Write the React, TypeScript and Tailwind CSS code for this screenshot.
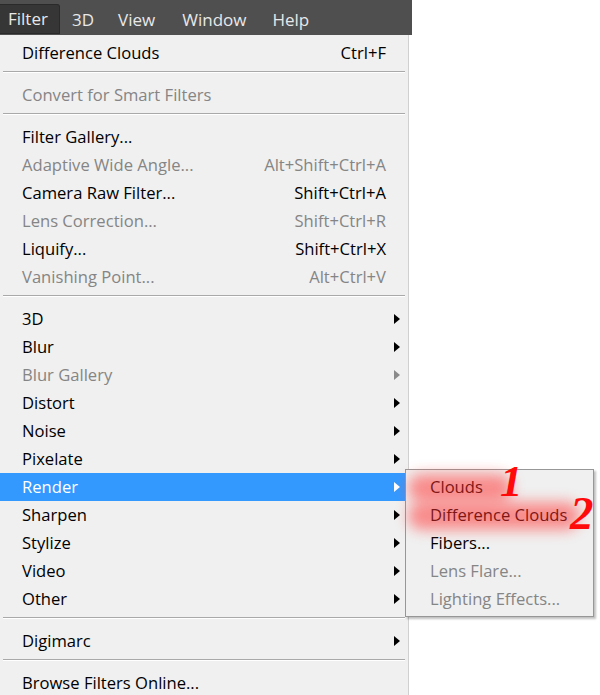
import React from "react";

type Item =
  | { sep: true }
  | { label: string; shortcut?: string; disabled?: boolean; sub?: boolean; active?: boolean };

const items: Item[] = [
  { label: "Difference Clouds", shortcut: "Ctrl+F" },
  { sep: true },
  { label: "Convert for Smart Filters", disabled: true },
  { sep: true },
  { label: "Filter Gallery..." },
  { label: "Adaptive Wide Angle...", shortcut: "Alt+Shift+Ctrl+A", disabled: true },
  { label: "Camera Raw Filter...", shortcut: "Shift+Ctrl+A" },
  { label: "Lens Correction...", shortcut: "Shift+Ctrl+R", disabled: true },
  { label: "Liquify...", shortcut: "Shift+Ctrl+X" },
  { label: "Vanishing Point...", shortcut: "Alt+Ctrl+V", disabled: true },
  { sep: true },
  { label: "3D", sub: true },
  { label: "Blur", sub: true },
  { label: "Blur Gallery", sub: true, disabled: true },
  { label: "Distort", sub: true },
  { label: "Noise", sub: true },
  { label: "Pixelate", sub: true },
  { label: "Render", sub: true, active: true },
  { label: "Sharpen", sub: true },
  { label: "Stylize", sub: true },
  { label: "Video", sub: true },
  { label: "Other", sub: true },
  { sep: true },
  { label: "Digimarc", sub: true },
  { sep: true },
  { label: "Browse Filters Online..." },
];

function Arrow({ color }: { color: string }) {
  return (
    <svg width="6" height="10" viewBox="0 0 6 10">
      <path d="M0 0 L6 5 L0 10 Z" fill={color} />
    </svg>
  );
}

export default function App() {
  return (
    <div
      className="relative w-[600px] h-[695px] bg-white overflow-hidden text-[16.6px]"
      style={{ fontFamily: '"Open Sans", "Noto Sans", sans-serif' }}
    >
      {/* Menu bar */}
      <div className="flex items-end h-[35px] w-[412px] bg-[#4f4f4f] text-[#e8e8e8] text-[17px]">
        <div className="h-[30px] w-[60px] mb-[1px] flex items-center pl-[8px] bg-[#363636] border border-[#2a2a2a] rounded-tr-[3px] border-l-0">
          Filter
        </div>
        <div className="h-[30px] flex items-center ml-[12px]">3D</div>
        <div className="h-[30px] flex items-center ml-[24px]">View</div>
        <div className="h-[30px] flex items-center ml-[27px]">Window</div>
        <div className="h-[30px] flex items-center ml-[26px]">Help</div>
      </div>

      {/* Main menu */}
      <div className="w-[409px] bg-[#f0f0f0] border-r border-[#d0d0d0] pt-[4px] pb-[4px]">
        {items.map((it, i) => {
          if ("sep" in it) {
            return (
              <div key={i} className="pt-[4px] pb-[8px] pl-[3px] pr-[3px]">
                <div className="h-[2px] bg-[#a9a9a9] border-b border-[#ffffff]" />
              </div>
            );
          }
          const color = it.active ? "text-white" : it.disabled ? "text-[#858585]" : "text-black";
          return (
            <div
              key={i}
              className={`flex items-center h-[28px] pl-[22px] ${color} ${it.active ? "bg-[#3399ff]" : ""}`}
            >
              <div className="flex-1 whitespace-nowrap">{it.label}</div>
              {it.shortcut && <div className="whitespace-nowrap">{it.shortcut}</div>}
              <div className="w-[22px] flex justify-end pr-[8px]">
                {it.sub && <Arrow color={it.active ? "#ffffff" : it.disabled ? "#8a8a8a" : "#000000"} />}
              </div>
            </div>
          );
        })}
      </div>

      {/* Submenu */}
      <div className="absolute left-[405px] top-[469px] w-[189px] bg-[#f0f0f0] border border-[#979797] shadow-[2px_2px_2px_rgba(0,0,0,0.25)] py-[3px]">
        <div className="relative h-[28px] flex items-center pl-[24px]">
          <div className="absolute left-[2px] top-[1px] w-[104px] h-[28px] bg-[#ff4a4a] opacity-60 blur-[7px] rounded-full" />
          <span className="relative text-[#7d1717]">Clouds</span>
        </div>
        <div className="relative h-[28px] flex items-center pl-[24px]">
          <div className="absolute left-[2px] top-[1px] w-[172px] h-[28px] bg-[#ff4a4a] opacity-60 blur-[7px] rounded-full" />
          <span className="relative text-[#7d1717] whitespace-nowrap">Difference Clouds</span>
        </div>
        <div className="h-[28px] flex items-center pl-[24px] text-black">Fibers...</div>
        <div className="h-[28px] flex items-center pl-[24px] text-[#858585]">Lens Flare...</div>
        <div className="h-[28px] flex items-center pl-[24px] text-[#858585] whitespace-nowrap">Lighting Effects...</div>
      </div>

      {/* Red numbers */}
      <div
        className="absolute left-[500px] top-[465px] h-[32px] text-[45px] italic font-bold text-[#ff0a0a] leading-[32px]"
        style={{ fontFamily: '"Liberation Serif", serif' }}
      >
        1
      </div>
      <div
        className="absolute left-[570px] top-[496px] h-[34px] text-[47px] italic font-bold text-[#ff0a0a] leading-[34px]"
        style={{ fontFamily: '"Liberation Serif", serif' }}
      >
        2
      </div>
    </div>
  );
}
